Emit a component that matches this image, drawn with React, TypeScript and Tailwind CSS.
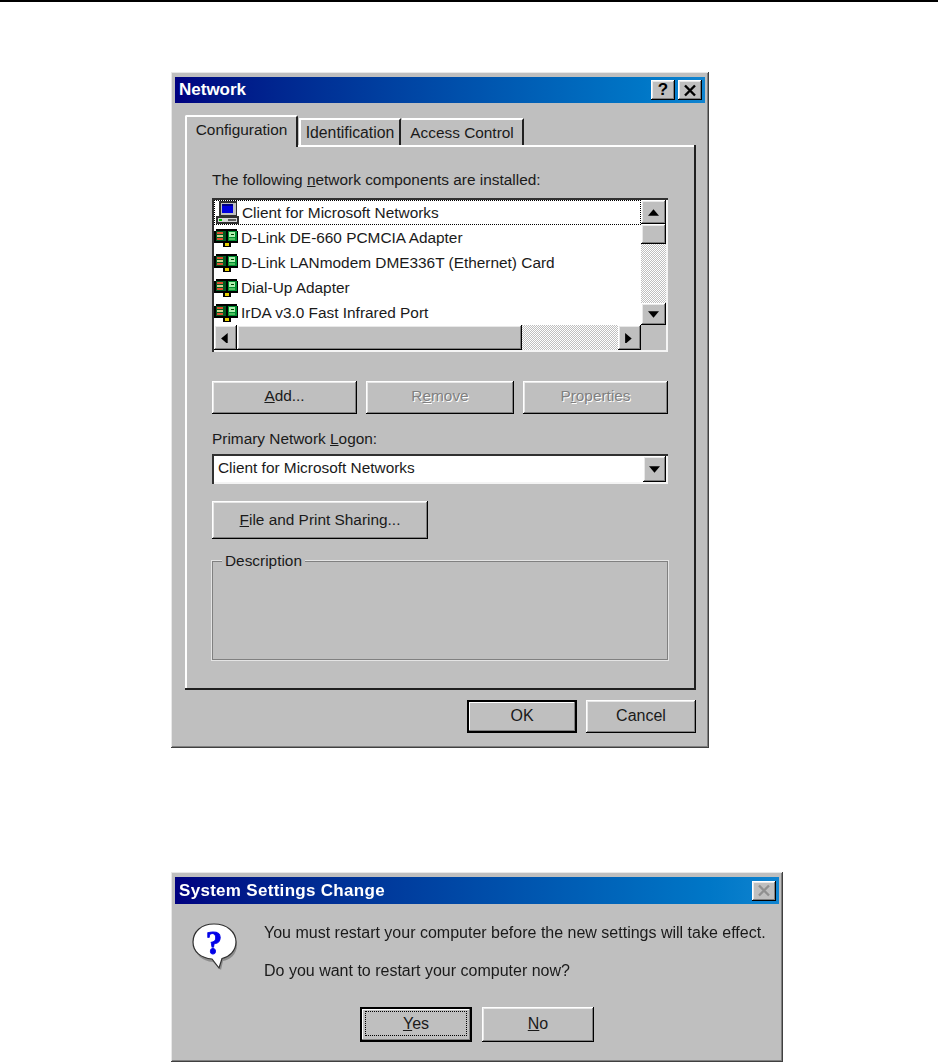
import type { ReactNode } from "react"

const raised = "shadow-[inset_-1px_-1px_0_#000,inset_1px_1px_0_#fff,inset_-2px_-2px_0_#808080,inset_2px_2px_0_#e8e8e8]"
const sunken = "shadow-[inset_2px_2px_0_#303030,inset_-2px_-2px_0_#f4f4f4]"
const dither = "bg-[repeating-conic-gradient(#fff_0_25%,#bfbfbf_0_50%)] bg-[length:2px_2px]"

function Arrow({ dir }: { dir: "up" | "down" | "left" | "right" }) {
  const points = {
    up: "5,1 10,7 0,7",
    down: "0,1 10,1 5,7",
    left: "7,0 7,10 1,5",
    right: "1,0 1,10 7,5",
  }[dir]
  return (
    <svg width="11" height="11" viewBox="0 0 10 8" className="block">
      <polygon points={points} fill="#000" />
    </svg>
  )
}

function ScrollBtn({ dir, className }: { dir: "up" | "down" | "left" | "right"; className: string }) {
  return (
    <div className={`flex items-center justify-center bg-[#bfbfbf] ${raised} ${className}`}>
      <Arrow dir={dir} />
    </div>
  )
}

function Button({
  children,
  className,
  disabled,
  isDefault,
}: {
  children: ReactNode
  className: string
  disabled?: boolean
  isDefault?: boolean
}) {
  return (
    <div
      className={`relative flex items-center justify-center bg-[#bfbfbf] ${
        isDefault
          ? "shadow-[inset_0_0_0_2px_#000,inset_-3px_-3px_0_#808080,inset_3px_3px_0_#fff]"
          : raised
      } ${disabled ? "text-[#808080] [text-shadow:1px_1px_0_#fff]" : ""} ${className}`}
    >
      {children}
    </div>
  )
}

function CardIcon() {
  return (
    <svg width="24" height="18" viewBox="0 0 16 12" shapeRendering="crispEdges" className="block shrink-0">
      <rect x="0" y="1" width="16" height="8" fill="#000" />
      <rect x="1" y="0" width="14" height="9" fill="#000" />
      <rect x="1" y="1" width="7" height="7" fill="#005a20" />
      <rect x="9" y="1" width="6" height="7" fill="#009030" />
      <rect x="2" y="2" width="4" height="1" fill="#e05030" />
      <rect x="2" y="4" width="4" height="1" fill="#d0d890" />
      <rect x="2" y="6" width="4" height="1" fill="#e05030" />
      <rect x="10" y="2" width="4" height="3" fill="#b0f0b0" />
      <rect x="11" y="3" width="2" height="1" fill="#004000" />
      <rect x="10" y="6" width="4" height="1" fill="#50c060" />
      <rect x="6" y="8" width="6" height="1" fill="#000" />
      <rect x="6" y="9" width="5" height="3" fill="#000" />
      <rect x="7" y="9" width="3" height="2" fill="#e8d000" />
    </svg>
  )
}

function ComputerIcon() {
  return (
    <svg width="24" height="24" viewBox="0 0 16 16" shapeRendering="crispEdges" className="block shrink-0">
      <rect x="2" y="0" width="12" height="10" fill="#303030" />
      <rect x="3" y="1" width="10" height="8" fill="#c0c0c0" />
      <rect x="4" y="2" width="7" height="6" fill="#0000e0" />
      <rect x="4" y="2" width="7" height="1" fill="#000080" />
      <rect x="0" y="10" width="15" height="5" fill="#303030" />
      <rect x="1" y="11" width="13" height="3" fill="#d8d8d8" />
      <rect x="2" y="12" width="2" height="1" fill="#00c000" />
      <rect x="8" y="12" width="5" height="1" fill="#606060" />
    </svg>
  )
}

function QuestionIcon() {
  return (
    <svg width="52" height="50" viewBox="0 0 52 50" className="block">
      <path d="M27 5c12 0 21 8 21 18s-8 15-14 16l-2 9-8-8C13 39 6 33 6 23S15 5 27 5z" fill="#808080" opacity="0.8" />
      <path d="M25 2c13 0 22 8 22 18 0 9-7 15-14 16.500l-3 9.500-7-9C12 36 4 30 4 20 4 10 12 2 25 2z" fill="#fff" stroke="#303030" strokeWidth="1.2" />
      <text x="25" y="32" textAnchor="middle" fill="#0000e8" stroke="#0000e8" strokeWidth="0.8" fontFamily="'Liberation Serif', serif" fontWeight="700" fontSize="33">?</text>
    </svg>
  )
}

function TitleBar({ title, children, className }: { title: string; children: ReactNode; className: string }) {
  return (
    <div className={`flex items-center justify-between bg-gradient-to-r from-[#000080] to-[#1084d0] pl-[4px] pr-[3px] ${className}`}>
      <span className="text-[17px] font-bold text-white">{title}</span>
      <div className="flex">{children}</div>
    </div>
  )
}

function CloseGlyph({ color }: { color: string }) {
  return (
    <svg width="14" height="13" viewBox="0 0 14 13">
      <path d="M2 1.500L12 11.500M12 1.500L2 11.500" stroke={color} strokeWidth="2.4" />
    </svg>
  )
}

const rows = [
  "D-Link DE-660 PCMCIA Adapter",
  "D-Link LANmodem DME336T (Ethernet) Card",
  "Dial-Up Adapter",
  "IrDA v3.0 Fast Infrared Port",
]

function ComponentList() {
  return (
    <div className={`mt-[8px] h-[154px] w-[456px] bg-white p-[2px] ${sunken}`}>
      <div className="flex h-[125px]">
        <div className="w-[427px] overflow-hidden bg-white">
          <div className="flex h-[25px] items-center gap-[2px] border border-dotted border-black pl-[1px]">
            <ComputerIcon />
            <span>Client for Microsoft Networks</span>
          </div>
          {rows.map((row) => (
            <div key={row} className="flex h-[25px] items-center gap-[3px] whitespace-nowrap">
              <CardIcon />
              <span>{row}</span>
            </div>
          ))}
        </div>
        <div className="flex w-[25px] flex-col">
          <ScrollBtn dir="up" className="h-[24px]" />
          <div className={`h-[20px] bg-[#bfbfbf] ${raised}`} />
          <div className={`flex-1 ${dither}`} />
          <ScrollBtn dir="down" className="h-[22px]" />
        </div>
      </div>
      <div className="flex h-[25px]">
        <ScrollBtn dir="left" className="w-[23px]" />
        <div className={`w-[285px] bg-[#bfbfbf] ${raised}`} />
        <div className={`flex-1 ${dither}`} />
        <ScrollBtn dir="right" className="w-[23px]" />
        <div className="w-[25px] bg-[#bfbfbf]" />
      </div>
    </div>
  )
}

function NetworkDialog() {
  return (
    <div className="ml-[171px] mt-[70px] flex h-[676px] w-[538px] flex-col bg-[#bfbfbf] p-[4px] pt-[5px] text-[15.4px] shadow-[inset_-1px_-1px_0_#404040,inset_1px_1px_0_#e8e8e8,inset_-2px_-2px_0_#808080]">
      <TitleBar title="Network" className="h-[26px]">
        <div className={`flex h-[20px] w-[24px] items-center justify-center bg-[#bfbfbf] text-[17px] font-bold text-black ${raised}`}>?</div>
        <div className={`ml-[3px] flex h-[20px] w-[24px] items-center justify-center bg-[#bfbfbf] ${raised}`}>
          <CloseGlyph color="#000" />
        </div>
      </TitleBar>

      {/* tabs */}
      <div className="relative z-10 ml-[10px] mt-[12px] flex h-[32px] items-start">
        <div className="flex h-[32px] w-[113px] items-center justify-center rounded-t-[2px] border-l-2 border-r-2 border-t-2 border-l-white border-r-[#202020] border-t-white bg-[#bfbfbf] pb-[5px]">
          Configuration
        </div>
        <div className="ml-[1px] mt-[3px] flex h-[27px] w-[102px] items-center justify-center border-l-2 border-r-2 border-t-2 border-l-white border-r-[#202020] border-t-white text-[15.800px]">
          Identification
        </div>
        <div className="ml-[1px] mt-[3px] flex h-[27px] w-[122px] items-center justify-center border-r-2 border-t-2 border-r-[#202020] border-t-white">
          Access Control
        </div>
      </div>

      {/* panel */}
      <div className="-mt-[2px] ml-[10px] h-[545px] w-[511px] pl-[27px] pt-[25px] shadow-[inset_-2px_-2px_0_#202020,inset_2px_2px_0_#fff]">
        <div className="h-[20px] leading-[20px]">
          The following <u>n</u>etwork components are installed:
        </div>
        <ComponentList />
        <div className="mt-[29px] flex gap-[9px]">
          <Button className="h-[33px] w-[145px] pb-[4px]">
            <span><u>A</u>dd...</span>
          </Button>
          <Button className="h-[33px] w-[148px] pb-[4px]" disabled>
            <span>R<u>e</u>move</span>
          </Button>
          <Button className="h-[33px] w-[145px] pb-[4px]" disabled>
            <span>P<u>r</u>operties</span>
          </Button>
        </div>
        <div className="mt-[15px] h-[20px] leading-[20px]">
          Primary Network <u>L</u>ogon:
        </div>
        <div className={`mt-[5px] flex h-[30px] w-[456px] items-center justify-between bg-white pl-[6px] pr-[2px] ${sunken}`}>
          <span className="pb-[2px]">Client for Microsoft Networks</span>
          <ScrollBtn dir="down" className="h-[26px] w-[23px]" />
        </div>
        <Button className="mt-[17px] h-[38px] w-[216px]">
          <span><u>F</u>ile and Print Sharing...</span>
        </Button>
        <div className="relative mt-[22px] h-[99px] w-[456px] shadow-[inset_1px_1px_0_#808080,inset_-1px_-1px_0_#808080,0_0_0_1px_#e4e4e4]">
          <span className="absolute -top-[10px] left-[10px] bg-[#bfbfbf] px-[3px] leading-[20px]">Description</span>
        </div>
      </div>

      <div className="mt-[10px] flex justify-end gap-[9px] pr-[9px] text-[16px]">
        <Button className="h-[33px] w-[110px] pb-[2px]" isDefault>OK</Button>
        <Button className="h-[33px] w-[110px] pb-[2px]">Cancel</Button>
      </div>
    </div>
  )
}

function RestartDialog() {
  return (
    <div className="ml-[171px] mt-[124px] h-[190px] w-[612px] bg-[#bfbfbf] p-[4px] pt-[5px] shadow-[inset_-1px_-1px_0_#404040,inset_1px_1px_0_#e8e8e8,inset_-2px_-2px_0_#808080]">
      <TitleBar title="System Settings Change" className="h-[27px] tracking-[0.3px]">
        <div className={`flex h-[20px] w-[24px] items-center justify-center bg-[#bfbfbf] ${raised}`}>
          <CloseGlyph color="#909090" />
        </div>
      </TitleBar>
      <div className="mt-[18px] flex pl-[14px]">
        <QuestionIcon />
        <div className="ml-[23px] pt-[1px]">
          <div className="h-[20px] leading-[20px]">You must restart your computer before the new settings will take effect.</div>
          <div className="mt-[18px] h-[20px] leading-[20px]">Do you want to restart your computer now?</div>
        </div>
      </div>
      <div className="-mt-[7px] ml-[185px] flex gap-[10px] pt-[33px]">
        <Button className="h-[35px] w-[112px] pb-[2px]" isDefault>
          <div className="flex h-[25px] w-[102px] items-center justify-center border border-dotted border-black">
            <span><u>Y</u>es</span>
          </div>
        </Button>
        <Button className="h-[35px] w-[112px] pb-[2px]">
          <span><u>N</u>o</span>
        </Button>
      </div>
    </div>
  )
}

export default function App() {
  return (
    <div className="h-[1062px] w-[938px] overflow-hidden bg-white font-['Liberation_Sans',Arial,sans-serif] text-[16px] text-[#1a1a1a]">
      <div className="h-[2px] bg-black" />
      <div className="blur-[0.4px]">
        <NetworkDialog />
        <RestartDialog />
      </div>
    </div>
  )
}
